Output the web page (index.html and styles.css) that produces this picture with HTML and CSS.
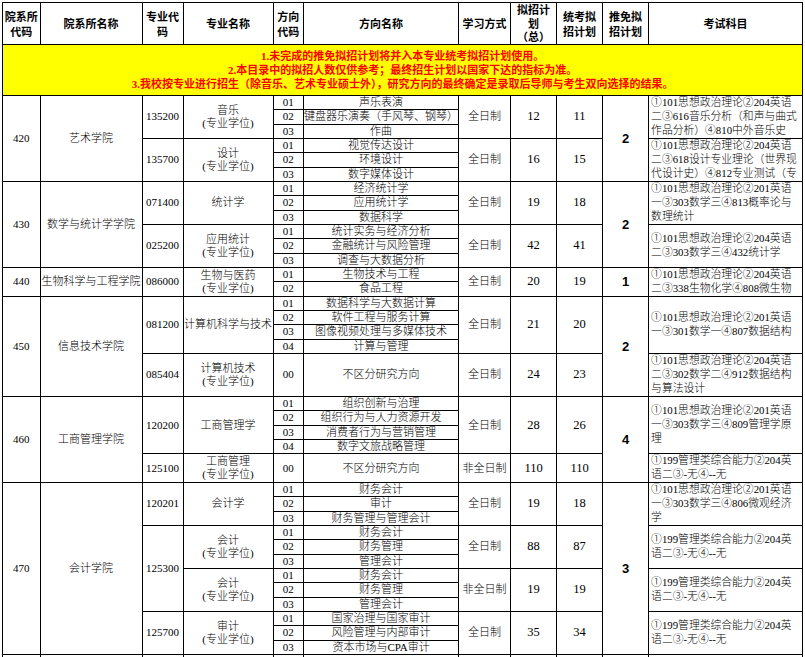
FILE: index.html
```html
<!DOCTYPE html>
<html lang="zh-CN">
<head>
<meta charset="utf-8">
<title>招生目录</title>
<link rel="stylesheet" href="styles.css">
</head>
<body>
<table class="plan">
<colgroup>
<col class="c1"><col class="c2"><col class="c3"><col class="c4"><col class="c5"><col class="c6"><col class="c7"><col class="c8"><col class="c9"><col class="c10"><col class="c11">
</colgroup>
<thead>
<tr class="head">
<th>院系所<br>代码</th><th>院系所名称</th><th>专业代<br>码</th><th>专业名称</th><th>方向<br>代码</th><th>方向名称</th><th>学习方式</th><th class="tri">拟招计<br>划<br>（总）</th><th>统考拟<br>招计划</th><th>推免拟<br>招计划</th><th>考试科目</th>
</tr>
</thead>
<tbody>
<tr class="notice"><td colspan="11">1.未完成的推免拟招计划将并入本专业统考拟招计划使用。<br>2.本目录中的拟招人数仅供参考；最终招生计划以国家下达的指标为准。<br>3.我校按专业进行招生（除音乐、艺术专业硕士外），研究方向的最终确定是录取后导师与考生双向选择的结果。</td></tr>

<tr><td rowspan="6">420</td><td rowspan="6">艺术学院</td><td rowspan="3">135200</td><td rowspan="3" class="ml">音乐<br>(专业学位)</td><td>01</td><td>声乐表演</td><td rowspan="3">全日制</td><td rowspan="3" class="num">12</td><td rowspan="3" class="num">11</td><td rowspan="6" class="rec">2</td><td rowspan="3" class="ex">①101思想政治理论②204英语<br>二③616音乐分析（和声与曲式<br>作品分析）④810中外音乐史</td></tr>
<tr><td>02</td><td>键盘器乐演奏（手风琴、钢琴）</td></tr>
<tr><td>03</td><td>作曲</td></tr>
<tr><td rowspan="3">135700</td><td rowspan="3" class="ml">设计<br>(专业学位)</td><td>01</td><td>视觉传达设计</td><td rowspan="3">全日制</td><td rowspan="3" class="num">16</td><td rowspan="3" class="num">15</td><td rowspan="3" class="ex">①101思想政治理论②204英语<br>二③618设计专业理论（世界现<br>代设计史）④812专业测试（专</td></tr>
<tr><td>02</td><td>环境设计</td></tr>
<tr><td>03</td><td>数字媒体设计</td></tr>

<tr><td rowspan="6">430</td><td rowspan="6">数学与统计学学院</td><td rowspan="3">071400</td><td rowspan="3">统计学</td><td>01</td><td>经济统计学</td><td rowspan="3">全日制</td><td rowspan="3" class="num">19</td><td rowspan="3" class="num">18</td><td rowspan="6" class="rec">2</td><td rowspan="3" class="ex">①101思想政治理论②201英语<br>一③303数学三④813概率论与<br>数理统计</td></tr>
<tr><td>02</td><td>应用统计学</td></tr>
<tr><td>03</td><td>数据科学</td></tr>
<tr><td rowspan="3">025200</td><td rowspan="3" class="ml">应用统计<br>(专业学位)</td><td>01</td><td>统计实务与经济分析</td><td rowspan="3">全日制</td><td rowspan="3" class="num">42</td><td rowspan="3" class="num">41</td><td rowspan="3" class="ex">①101思想政治理论②204英语<br>二③303数学三④432统计学</td></tr>
<tr><td>02</td><td>金融统计与风险管理</td></tr>
<tr><td>03</td><td>调查与大数据分析</td></tr>

<tr><td rowspan="2">440</td><td rowspan="2">生物科学与工程学院</td><td rowspan="2">086000</td><td rowspan="2" class="ml">生物与医药<br>(专业学位)</td><td>01</td><td>生物技术与工程</td><td rowspan="2">全日制</td><td rowspan="2" class="num">20</td><td rowspan="2" class="num">19</td><td rowspan="2" class="rec">1</td><td rowspan="2" class="ex">①101思想政治理论②204英语<br>二③338生物化学④808微生物</td></tr>
<tr><td>02</td><td>食品工程</td></tr>

<tr><td rowspan="5">450</td><td rowspan="5">信息技术学院</td><td rowspan="4">081200</td><td rowspan="4">计算机科学与技术</td><td>01</td><td>数据科学与大数据计算</td><td rowspan="4">全日制</td><td rowspan="4" class="num">21</td><td rowspan="4" class="num">20</td><td rowspan="5" class="rec">2</td><td rowspan="4" class="ex">①101思想政治理论②201英语<br>一③301数学一④807数据结构</td></tr>
<tr><td>02</td><td>软件工程与服务计算</td></tr>
<tr><td>03</td><td>图像视频处理与多媒体技术</td></tr>
<tr><td>04</td><td>计算与管理</td></tr>
<tr class="h3"><td>085404</td><td class="ml">计算机技术<br>(专业学位)</td><td>00</td><td>不区分研究方向</td><td>全日制</td><td class="num">24</td><td class="num">23</td><td class="ex">①101思想政治理论②204英语<br>二③302数学二④912数据结构<br>与算法设计</td></tr>

<tr><td rowspan="5">460</td><td rowspan="5">工商管理学院</td><td rowspan="4">120200</td><td rowspan="4">工商管理学</td><td>01</td><td>组织创新与治理</td><td rowspan="4">全日制</td><td rowspan="4" class="num">28</td><td rowspan="4" class="num">26</td><td rowspan="5" class="rec">4</td><td rowspan="4" class="ex">①101思想政治理论②201英语<br>一③303数学三④809管理学原<br>理</td></tr>
<tr><td>02</td><td>组织行为与人力资源开发</td></tr>
<tr><td>03</td><td>消费者行为与营销管理</td></tr>
<tr><td>04</td><td>数字文旅战略管理</td></tr>
<tr class="h2"><td>125100</td><td class="ml">工商管理<br>(专业学位)</td><td>00</td><td>不区分研究方向</td><td>非全日制</td><td class="num">110</td><td class="num">110</td><td class="ex">①199管理类综合能力②204英<br>语二③-无④--无</td></tr>

<tr><td rowspan="12">470</td><td rowspan="12">会计学院</td><td rowspan="3">120201</td><td rowspan="3">会计学</td><td>01</td><td>财务会计</td><td rowspan="3">全日制</td><td rowspan="3" class="num">19</td><td rowspan="3" class="num">18</td><td rowspan="12" class="rec">3</td><td rowspan="3" class="ex">①101思想政治理论②201英语<br>一③303数学三④806微观经济<br>学</td></tr>
<tr><td>02</td><td>审计</td></tr>
<tr><td>03</td><td>财务管理与管理会计</td></tr>
<tr><td rowspan="6">125300</td><td rowspan="3" class="ml">会计<br>(专业学位)</td><td>01</td><td>财务会计</td><td rowspan="3">全日制</td><td rowspan="3" class="num">88</td><td rowspan="3" class="num">87</td><td rowspan="3" class="ex">①199管理类综合能力②204英<br>语二③-无④--无</td></tr>
<tr><td>02</td><td>财务管理</td></tr>
<tr><td>03</td><td>管理会计</td></tr>
<tr><td rowspan="3" class="ml">会计<br>(专业学位)</td><td>01</td><td>财务会计</td><td rowspan="3">非全日制</td><td rowspan="3" class="num">19</td><td rowspan="3" class="num">19</td><td rowspan="3" class="ex">①199管理类综合能力②204英<br>语二③-无④--无</td></tr>
<tr><td>02</td><td>财务管理</td></tr>
<tr><td>03</td><td>管理会计</td></tr>
<tr><td rowspan="3">125700</td><td rowspan="3" class="ml">审计<br>(专业学位)</td><td>01</td><td>国家治理与国家审计</td><td rowspan="3">全日制</td><td rowspan="3" class="num">35</td><td rowspan="3" class="num">34</td><td rowspan="3" class="ex">①199管理类综合能力②204英<br>语二③-无④--无</td></tr>
<tr><td>02</td><td>风险管理与内部审计</td></tr>
<tr><td>03</td><td>资本市场与CPA审计</td></tr>

<tr><td></td><td></td><td></td><td></td><td></td><td></td><td></td><td></td><td></td><td></td><td></td></tr>
</tbody>
</table>
</body>
</html>
```

FILE: styles.css
```css
html, body {
  margin: 0;
  padding: 0;
  background: #ffffff;
}
body {
  padding: 2px 0 0 2px;
  font-family: "Liberation Serif", "Noto Sans CJK SC", serif;
  font-weight: 300;
  color: #000000;
}
.plan {
  border-collapse: collapse;
  table-layout: fixed;
  width: 800px;
  font-size: 11px;
}
.c1 { width: 37.5px; }
.c2 { width: 102px; }
.c3 { width: 41px; }
.c4 { width: 90px; }
.c5 { width: 30.6px; }
.c6 { width: 155px; }
.c7 { width: 52px; }
.c8 { width: 46px; }
.c9 { width: 46px; }
.c10 { width: 46px; }
.c11 { width: 154px; }

.plan th, .plan td {
  border: 1px solid #000000;
  padding: 0;
  text-align: center;
  vertical-align: middle;
  line-height: 13px;
  white-space: nowrap;
  overflow: hidden;
}
.plan tr { height: 14.34px; }
.plan tr.h2 { height: 28.68px; }
.plan tr.h3 { height: 43.02px; }

.head { height: 42px !important; }
.head th {
  font-family: "Noto Sans CJK SC", sans-serif;
  font-weight: bold;
  font-size: 11px;
  line-height: 15px;
}
.head th.tri { line-height: 13.6px; }

.notice { height: 51px !important; }
.notice td {
  background: #ffff00;
  color: #ff0000;
  font-weight: bold;
  font-size: 11px;
  line-height: 14.2px;
}

.ml { line-height: 13px; }
.num { font-size: 12.5px; }
.rec {
  font-family: "Liberation Sans", sans-serif;
  font-weight: bold;
  font-size: 13px;
}
.plan td.ex {
  text-align: left;
  padding-left: 2px;
  font-size: 10.8px;
  line-height: 13.8px;
}
```
